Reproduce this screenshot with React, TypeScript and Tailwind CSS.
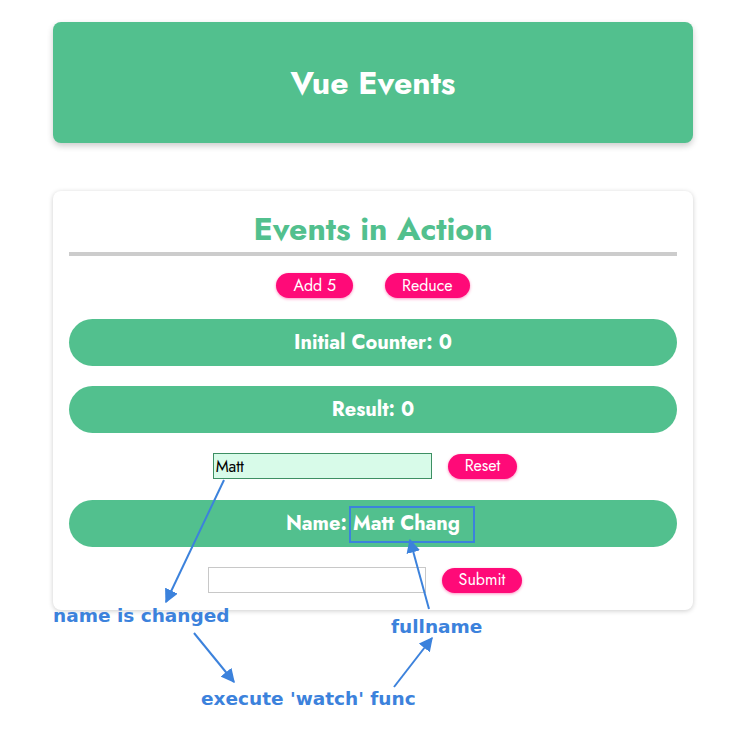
import React, { useState } from "react";

const jost = { fontFamily: "Jost, Lato, 'Open Sans', sans-serif" };
const note = { fontFamily: "'DejaVu Sans', sans-serif" };

function Pill({ children }: { children: React.ReactNode }) {
  return (
    <button
      type="button"
      className="h-[25px] rounded-full bg-[#ff0a78] px-[17px] text-[16px] leading-none text-white shadow-[0_1px_3px_rgba(255,10,120,0.45)]"
    >
      {children}
    </button>
  );
}

function Bar({ children }: { children: React.ReactNode }) {
  return (
    <div className="flex h-[47px] items-center justify-center rounded-full bg-[#52c08e] text-[20px] font-bold text-white">
      {children}
    </div>
  );
}

export default function App() {
  const [first, setFirst] = useState("Matt");
  const [last, setLast] = useState("");

  return (
    <main
      className="relative min-h-[734px] w-full bg-white pt-[22px]"
      style={jost}
    >
      <header className="mx-auto flex h-[121px] w-[640px] items-center justify-center rounded-lg bg-[#52c08e] shadow-[0_3px_6px_rgba(0,0,0,0.2)]">
        <h1 className="text-[32px] font-bold text-white">Vue Events</h1>
      </header>

      <section className="mx-auto mt-[48px] w-[640px] rounded-lg bg-white px-4 pb-[17px] pt-[20px] shadow-[0_1px_5px_rgba(0,0,0,0.2)]">
        <h2 className="text-center text-[32px] font-bold leading-[36px] text-[#52c08e]">
          Events in Action
        </h2>
        <div className="mt-[5px] h-[4px] bg-[#cccccc]" />

        <div className="mt-[17px] flex justify-center gap-[32px]">
          <Pill>Add 5</Pill>
          <Pill>Reduce</Pill>
        </div>

        <div className="mt-[21px] flex flex-col gap-[20px]">
          <Bar>Initial Counter: 0</Bar>
          <Bar>Result: 0</Bar>
        </div>

        <div className="mt-[20px] flex items-center justify-center gap-[16px] pr-[16px]">
          <input
            value={first}
            onChange={(e) => setFirst(e.target.value)}
            className="h-[26px] w-[219px] border border-[#3d8f63] bg-[#d8fbe9] px-[2px] text-[16px] text-black outline-none"
            style={jost}
          />
          <Pill>Reset</Pill>
        </div>

        <div className="mt-[21px]">
          <Bar>
            <span>Name:&nbsp;</span>
            <span className="relative">
              Matt Chang
              <span className="absolute -bottom-[4px] -left-[4px] -right-[15px] -top-[3px] border-2 border-[#3c82dc]" />
            </span>
          </Bar>
        </div>

        <div className="mt-[20px] flex items-center justify-center gap-[16px] pr-[16px]">
          <input
            value={last}
            onChange={(e) => setLast(e.target.value)}
            className="h-[26px] w-[218px] border border-[#c8c8c8] bg-white px-[2px] text-[16px] outline-none"
            style={jost}
          />
          <Pill>Submit</Pill>
        </div>
      </section>

      {/* annotations drawn over the page */}
      <svg
        className="pointer-events-none absolute left-0 top-0"
        width="746"
        height="734"
        viewBox="0 0 746 734"
      >
        <defs>
          <marker
            id="head"
            viewBox="0 0 10 10"
            refX="9"
            refY="5"
            markerWidth="7"
            markerHeight="7"
            orient="auto-start-reverse"
          >
            <path d="M0 0 L10 5 L0 10 z" fill="#3c82dc" />
          </marker>
        </defs>
        <g stroke="#3c82dc" strokeWidth="2" fill="none">
          <line x1="224" y1="480" x2="166" y2="602" markerEnd="url(#head)" />
          <line x1="429" y1="609" x2="410" y2="540" markerEnd="url(#head)" />
          <line x1="194" y1="633" x2="234" y2="682" markerEnd="url(#head)" />
          <line x1="394" y1="687" x2="432" y2="638" markerEnd="url(#head)" />
        </g>
      </svg>
      <div
        className="pointer-events-none absolute left-[53px] top-[607px] text-[18.5px] font-bold leading-none text-[#3c82dc]"
        style={note}
      >
        name is changed
      </div>
      <div
        className="pointer-events-none absolute left-[391px] top-[618px] text-[18.5px] font-bold leading-none text-[#3c82dc]"
        style={note}
      >
        fullname
      </div>
      <div
        className="pointer-events-none absolute left-[201px] top-[690px] text-[18.5px] font-bold leading-none text-[#3c82dc]"
        style={note}
      >
        execute 'watch' func
      </div>
    </main>
  );
}
